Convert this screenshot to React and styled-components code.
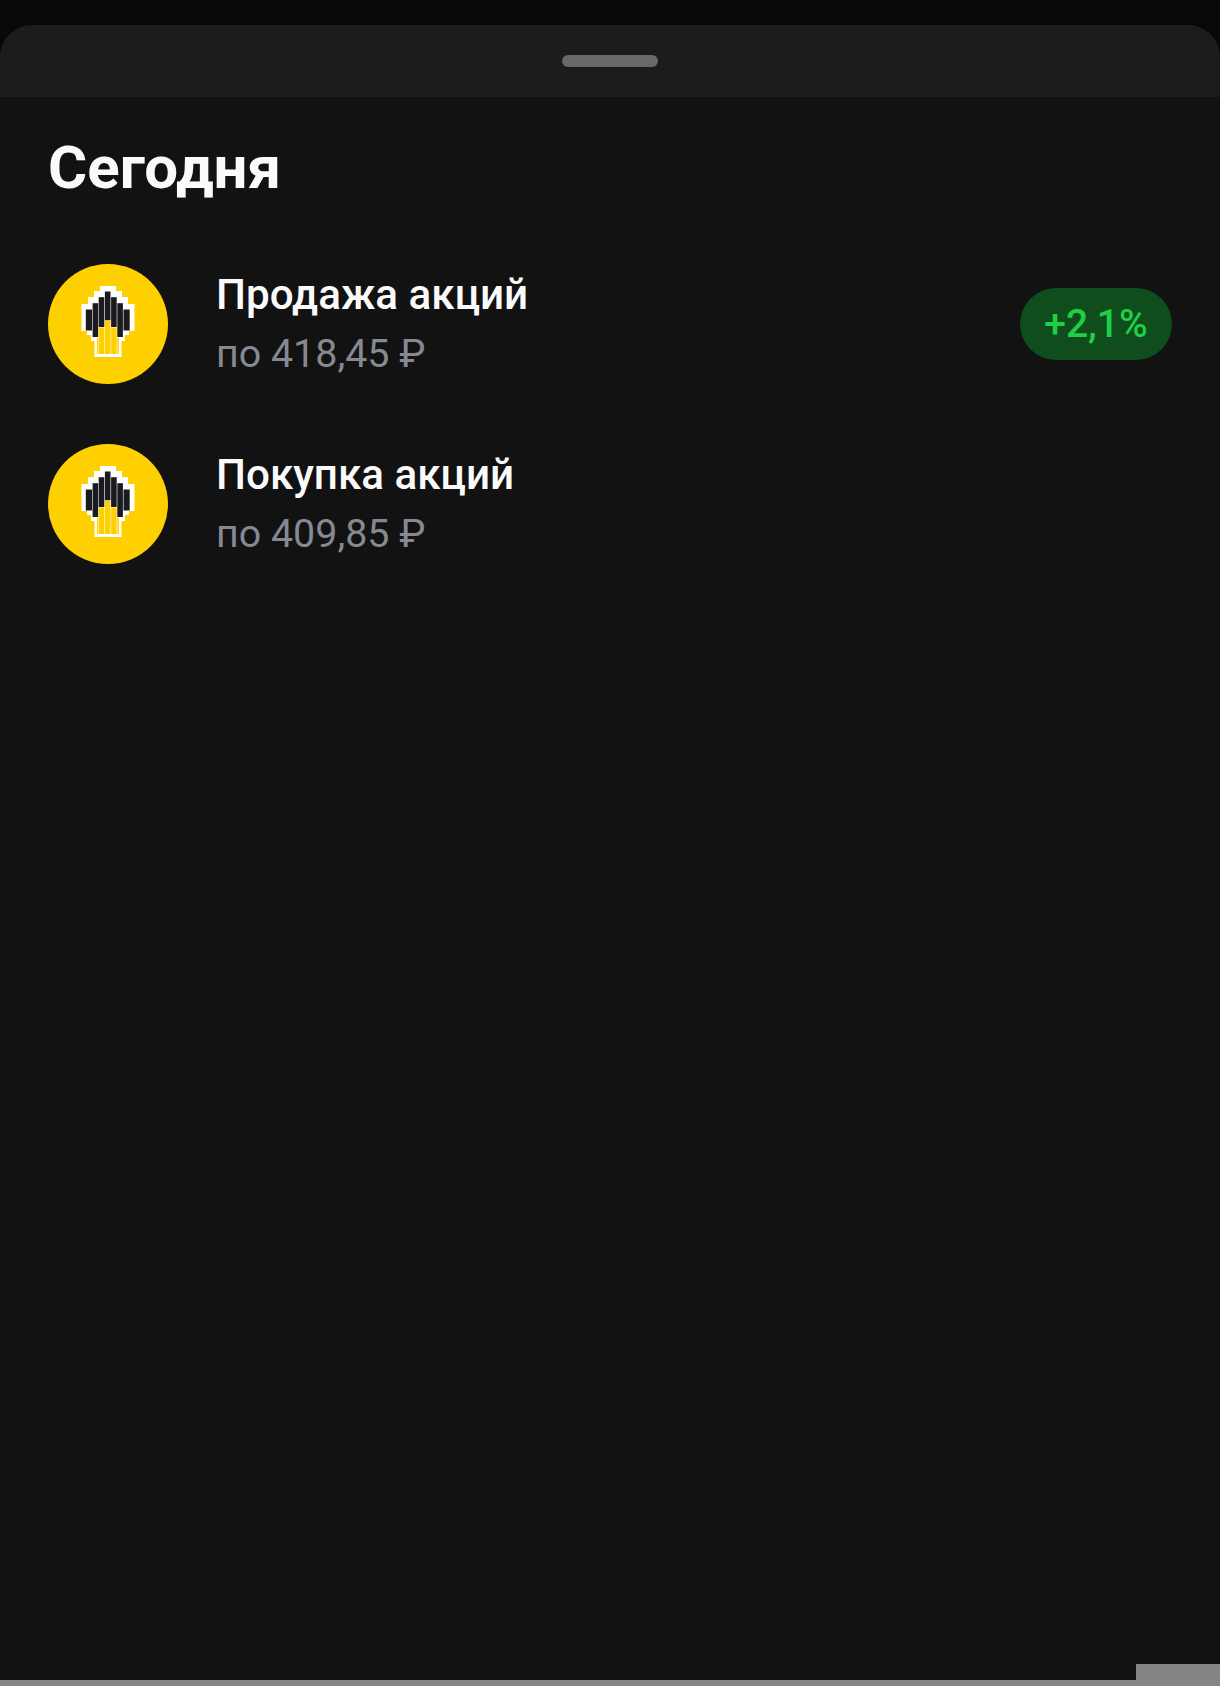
import styled, { createGlobalStyle } from 'styled-components';

const GlobalStyle = createGlobalStyle`
  html, body {
    margin: 0;
    padding: 0;
    background: #080808;
    font-family: Roboto, "Noto Sans", sans-serif;
  }
`;

const deals = [
  { id: 1, title: 'Продажа акций', price: 'по 418,45 ₽', change: '+2,1%' },
  { id: 2, title: 'Покупка акций', price: 'по 409,85 ₽' },
];

function RosneftLogo() {
  return (
    <LogoSvg viewBox="0 0 120 120">
      <path
        fill="#fff"
        d="M52 22H68V27H74V33H80V40H86.5V67H81V71H77V77H73.5V93H46.5V77H43V71H39V67H33.5V40H40V33H46V27H52Z"
      />
      <g fill="#1b1b1f">
        <rect x="37.8" y="45.5" width="6.2" height="21" />
        <rect x="44.6" y="39.2" width="5.6" height="33.8" />
        <rect x="50.7" y="33.2" width="5.6" height="29.8" />
        <rect x="56.9" y="27.5" width="5.6" height="28.8" />
        <rect x="63.1" y="33.2" width="5.6" height="29.8" />
        <rect x="69.3" y="39.2" width="5.6" height="33.8" />
        <rect x="75.5" y="45.5" width="6.2" height="21" />
      </g>
      <g fill="#ffd000">
        <rect x="50.7" y="63.5" width="5.6" height="26.5" />
        <rect x="56.9" y="56.8" width="5.6" height="33.2" />
        <rect x="63.1" y="63.5" width="5.6" height="26.5" />
        <rect x="69.3" y="74" width="1.6" height="16" />
        <rect x="49" y="74" width="1.2" height="16" />
      </g>
    </LogoSvg>
  );
}

function App() {
  return (
    <>
      <GlobalStyle />
      <Page>
        <Sheet>
          <SheetHeader>
            <Handle />
          </SheetHeader>
          <Content>
            <Title>Сегодня</Title>
            <List>
              {deals.map((deal) => (
                <Row key={deal.id}>
                  <Avatar>
                    <RosneftLogo />
                  </Avatar>
                  <Info>
                    <RowTitle>{deal.title}</RowTitle>
                    <RowPrice>{deal.price}</RowPrice>
                  </Info>
                  {deal.change && <Change>{deal.change}</Change>}
                </Row>
              ))}
            </List>
          </Content>
        </Sheet>
        <BottomLine />
        <BottomCorner />
      </Page>
    </>
  );
}

export default App;

const Page = styled.div`
  position: relative;
  width: 1220px;
  height: 1686px;
  padding-top: 25px;
  box-sizing: border-box;
  overflow: hidden;
  background: #080808;
`;

const Sheet = styled.div`
  display: flex;
  flex-direction: column;
  height: 100%;
  border-radius: 32px 32px 0 0;
  overflow: hidden;
  background: #121213;
`;

const SheetHeader = styled.div`
  display: flex;
  align-items: center;
  justify-content: center;
  flex: 0 0 72px;
  background: #1c1c1e;
`;

const Handle = styled.div`
  width: 96px;
  height: 12px;
  border-radius: 6px;
  background: #68686b;
`;

const Content = styled.div`
  padding: 39px 48px 0;
`;

const Title = styled.h1`
  margin: 0 0 64px;
  font-size: 60px;
  line-height: 64px;
  font-weight: 700;
  color: #fafafa;
`;

const List = styled.div`
  display: flex;
  flex-direction: column;
  gap: 60px;
`;

const Row = styled.div`
  display: flex;
  align-items: center;
  height: 120px;
`;

const Avatar = styled.div`
  flex: 0 0 120px;
  height: 120px;
  border-radius: 50%;
  background: #ffd000;
`;

const LogoSvg = styled.svg`
  display: block;
  width: 120px;
  height: 120px;
`;

const Info = styled.div`
  flex: 1;
  margin-left: 48px;
  padding-top: 1px;
`;

const RowTitle = styled.div`
  font-size: 42.2px;
  line-height: 56px;
  font-weight: 500;
  color: #fafafa;
`;

const RowPrice = styled.div`
  margin-top: 3px;
  font-size: 39.4px;
  line-height: 56px;
  font-weight: 400;
  color: #868991;
`;

const Change = styled.div`
  display: flex;
  align-items: center;
  justify-content: center;
  width: 152px;
  height: 72px;
  border-radius: 36px;
  font-size: 39px;
  font-weight: 500;
  color: #1fcf45;
  background: #0f4d1c;
`;

const BottomLine = styled.div`
  position: absolute;
  left: 0;
  right: 0;
  bottom: 0;
  height: 6px;
  background: #858585;
`;

const BottomCorner = styled.div`
  position: absolute;
  right: 0;
  bottom: 0;
  width: 84px;
  height: 22px;
  background: #858585;
`;
